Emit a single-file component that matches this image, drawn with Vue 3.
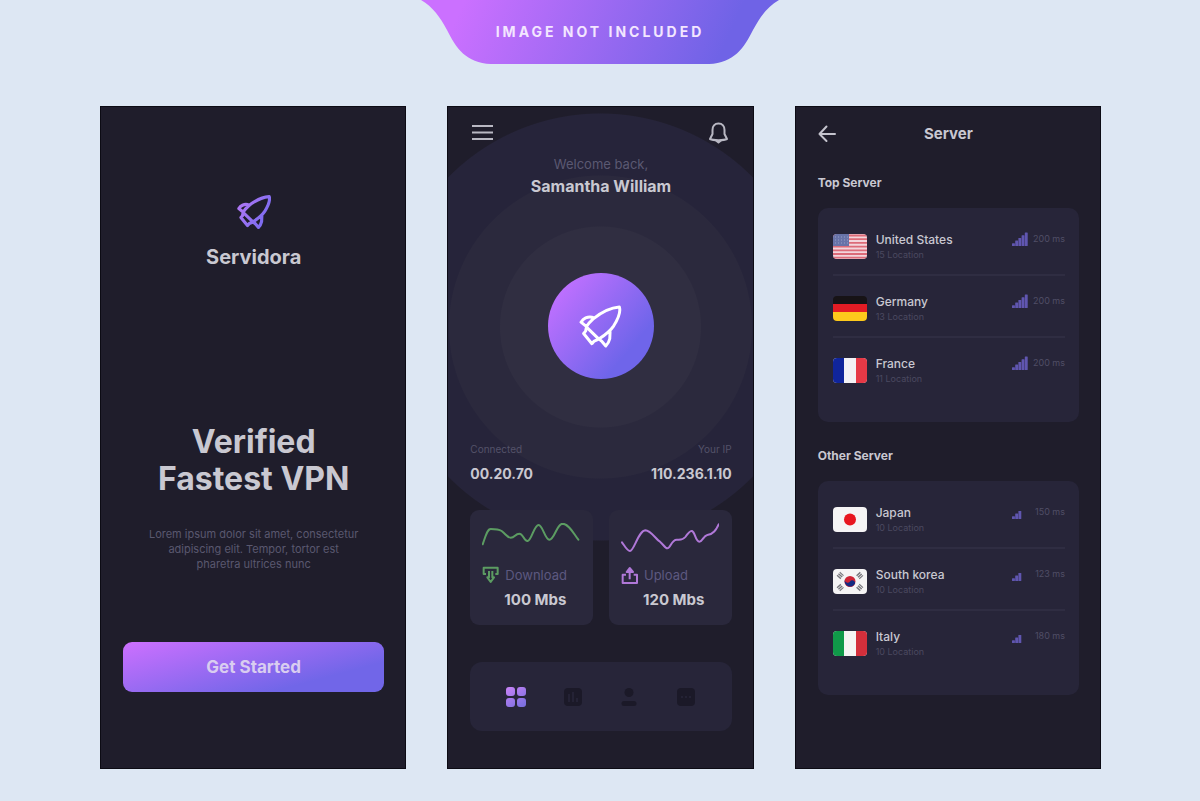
<script setup>
import { ref } from 'vue';

const activeTab = ref('home');

const rocketPath =
    'M519 289 C492 291 462 307 440 325 C431 333 424 341 419 349 L457 386 C474 375 490 364 502 346 C515 325 524 304 519 289 Z ' +
    'M442 322 C434 318 424 319 417 322 C410 325 406 330 403 335 L418 347 ' +
    'M419 352 L417 362 L411 369 L436 400 L443 392 L455 387 ' +
    'M459 387 L467 394 L478 407 C484 401 488 394 490 385 L491 363';

const speeds = [
    {
        id: 'download',
        label: 'Download',
        value: '100 Mbs',
        box: '66 54 294 90',
        line: 'M68 118 C78 90 82 72 92 72 C105 72 115 72 125 78 C138 88 142 98 152 98 C165 98 165 86 178 86 C190 86 192 110 203 108 C215 106 222 60 236 60 C248 60 255 104 268 104 C284 104 290 56 308 56 C328 58 340 85 355 104',
        iconBox: '62 183 54 54',
        icon: 'M74 207 H67 V188 H109 V207 H102 M83 198 V217 H78 L88 231 L98 217 H93 V198'
    },
    {
        id: 'upload',
        label: 'Upload',
        value: '120 Mbs',
        box: '483 54 294 90',
        line: 'M486 112 C495 125 502 138 510 138 C522 138 535 78 556 76 C572 76 590 105 600 110 C610 118 615 130 622 130 C632 130 634 104 650 104 C662 104 668 106 676 96 C684 84 690 76 696 78 C706 82 706 110 718 110 C728 110 730 92 742 90 C760 88 768 75 776 58',
        iconBox: '480 183 54 54',
        icon: 'M495 209 H485 V234 H528 V209 H518 M506 223 V190 M497 201 L506 189 L516 201 Z'
    }
];

const groups = [
    {
        title: 'Top Server',
        servers: [
            { flag: 'us', name: 'United States', locations: 15, ping: 200, bars: 5 },
            { flag: 'de', name: 'Germany', locations: 13, ping: 200, bars: 5 },
            { flag: 'fr', name: 'France', locations: 11, ping: 200, bars: 5 }
        ]
    },
    {
        title: 'Other Server',
        servers: [
            { flag: 'jp', name: 'Japan', locations: 10, ping: 150, bars: 3 },
            { flag: 'kr', name: 'South korea', locations: 10, ping: 123, bars: 3 },
            { flag: 'it', name: 'Italy', locations: 10, ping: 180, bars: 3 }
        ]
    }
];
</script>

<template>
    <div class="page">
        <header class="banner">
            <svg class="banner-shape" viewBox="0 0 358 64" preserveAspectRatio="none" aria-hidden="true">
                <defs>
                    <linearGradient id="bannerFill" x1="0" y1="0" x2="1" y2="0.08">
                        <stop offset="0.12" stop-color="#cb70ff" />
                        <stop offset="0.9" stop-color="#6f63e6" />
                    </linearGradient>
                </defs>
                <path d="M0 0 H358 C346 7 339 17 332 30 C323 48 313 63 288 64 H70 C45 63 35 48 26 30 C19 17 12 7 0 0 Z" fill="url(#bannerFill)" />
            </svg>
            <span class="banner-text">IMAGE NOT INCLUDED</span>
        </header>

        <main class="phones">
            <!-- Onboarding -->
            <section class="phone welcome">
                <svg class="logo" viewBox="397 283 128 130" aria-hidden="true">
                    <defs>
                        <linearGradient id="logoStroke" x1="0" y1="0" x2="1" y2="0.6">
                            <stop offset="0" stop-color="#b678f5" />
                            <stop offset="1" stop-color="#7a6bf0" />
                        </linearGradient>
                    </defs>
                    <path :d="rocketPath" fill="none" stroke="url(#logoStroke)" stroke-width="12" stroke-linejoin="round" stroke-linecap="round" />
                </svg>
                <p class="brand">Servidora</p>
                <h1 class="headline">Verified<br />Fastest VPN</h1>
                <p class="intro">
                    Lorem ipsum dolor sit amet, consectetur<br />
                    adipiscing elit. Tempor, tortor est<br />
                    pharetra ultrices nunc
                </p>
                <button class="start" type="button">Get Started</button>
            </section>

            <!-- Home -->
            <section class="phone home">
                <div class="topbar">
                    <button class="icon-button" type="button" aria-label="Menu">
                        <svg width="24" height="22" viewBox="0 0 24 22">
                            <path d="M2 4 H23 M2 10.5 H23 M2 17 H23" stroke="#b9b8c3" stroke-width="2.2" />
                        </svg>
                    </button>
                    <button class="icon-button" type="button" aria-label="Notifications">
                        <svg width="24" height="22" viewBox="0 0 24 22" fill="none" stroke="#b9b8c3" stroke-width="2" stroke-linejoin="round" stroke-linecap="round">
                            <path d="M10.5 1.5 C6.5 1.5 4.5 4.5 4.5 8 V12 L2 17 C5 18.5 16 18.5 19 17 L16.5 12 V8 C16.5 4.5 14.5 1.5 10.5 1.5 Z" />
                            <path d="M8 18.5 L10.5 20.5 L13 18.5" />
                        </svg>
                    </button>
                </div>
                <p class="greeting">Welcome back,</p>
                <h2 class="user">Samantha William</h2>

                <button class="connect" type="button" aria-label="Connect">
                    <svg width="43" height="43" viewBox="397 283 130 130" aria-hidden="true">
                        <path :d="rocketPath" fill="none" stroke="#fff" stroke-width="9" stroke-linejoin="round" stroke-linecap="round" />
                    </svg>
                </button>

                <dl class="status">
                    <div>
                        <dt>Connected</dt>
                        <dd>00.20.70</dd>
                    </div>
                    <div class="status-right">
                        <dt>Your IP</dt>
                        <dd>110.236.1.10</dd>
                    </div>
                </dl>

                <div class="speeds">
                    <article v-for="speed in speeds" :key="speed.id" class="speed" :class="speed.id">
                        <svg class="chart" :viewBox="speed.box" aria-hidden="true">
                            <path :d="speed.line" />
                        </svg>
                        <div class="speed-label">
                            <svg class="speed-icon" :viewBox="speed.iconBox" aria-hidden="true">
                                <path :d="speed.icon" />
                            </svg>
                            <span>{{ speed.label }}</span>
                        </div>
                        <strong class="speed-value">{{ speed.value }}</strong>
                    </article>
                </div>

                <nav class="tabs">
                    <button type="button" class="icon-button" aria-label="Home" @click="activeTab = 'home'">
                        <svg width="20" height="20" viewBox="0 0 20 20">
                            <defs>
                                <linearGradient id="tabFill" gradientUnits="userSpaceOnUse" x1="0" y1="0" x2="14" y2="20">
                                    <stop offset="0" stop-color="#c983f7" />
                                    <stop offset="1" stop-color="#7d70e0" />
                                </linearGradient>
                            </defs>
                            <g :fill="activeTab === 'home' ? 'url(#tabFill)' : '#1b1928'">
                                <rect x="0" y="0" width="9" height="9" rx="3" />
                                <rect x="11" y="0" width="9" height="9" rx="3" />
                                <rect x="0" y="11" width="9" height="9" rx="3" />
                                <rect x="11" y="11" width="9" height="9" rx="3" />
                            </g>
                        </svg>
                    </button>
                    <button type="button" class="icon-button" aria-label="Statistics">
                        <svg width="20" height="20" viewBox="0 0 20 20">
                            <rect x="1" y="1" width="18" height="18" rx="4" fill="#1b1928" />
                            <path d="M6 7 V15 M10 5 V15 M14 11 V15" stroke="#28263a" stroke-width="1.5" />
                        </svg>
                    </button>
                    <button type="button" class="icon-button" aria-label="Profile">
                        <svg width="20" height="20" viewBox="0 0 20 20" fill="#1b1928">
                            <circle cx="10" cy="5.5" r="4.5" />
                            <rect x="2.5" y="14" width="15" height="5" rx="2.5" />
                        </svg>
                    </button>
                    <button type="button" class="icon-button" aria-label="More">
                        <svg width="20" height="20" viewBox="0 0 20 20">
                            <rect x="1" y="1" width="18" height="18" rx="4" fill="#1b1928" />
                            <path d="M5 10 H15" stroke="#28263a" stroke-width="1.5" stroke-dasharray="2 2" />
                        </svg>
                    </button>
                </nav>
            </section>

            <!-- Server list -->
            <section class="phone list">
                <div class="list-head">
                    <button class="icon-button" type="button" aria-label="Back">
                        <svg width="18" height="18" viewBox="0 0 18 18" fill="none" stroke="#c4c3cd" stroke-width="2" stroke-linecap="round" stroke-linejoin="round">
                            <path d="M17 9 H1.5 M8.5 1.5 L1.5 9 L8.5 16" />
                        </svg>
                    </button>
                    <h2 class="list-title">Server</h2>
                </div>

                <template v-for="group in groups" :key="group.title">
                    <h3 class="group-title">{{ group.title }}</h3>
                    <ul class="group">
                        <li v-for="server in group.servers" :key="server.name" class="server">
                            <svg class="flag" viewBox="0 0 34 25" aria-hidden="true">
                                <g v-if="server.flag === 'us'">
                                    <rect width="34" height="25" fill="#f3d5db" />
                                    <path d="M0 1.5 H34 M0 5.2 H34 M0 8.9 H34 M0 12.6 H34 M0 16.3 H34 M0 20 H34 M0 23.7 H34" stroke="#dc6b78" stroke-width="1.8" />
                                    <rect width="16" height="12" fill="#6873a8" />
                                    <path d="M2 3 H15 M2 6 H15 M2 9 H15" stroke="#98a0c6" stroke-dasharray="1 2" />
                                </g>
                                <g v-else-if="server.flag === 'de'">
                                    <rect width="34" height="25" fill="#171316" />
                                    <rect y="8" width="34" height="9" fill="#e31c24" />
                                    <rect y="16" width="34" height="9" fill="#fdc91c" />
                                </g>
                                <g v-else-if="server.flag === 'fr'">
                                    <rect width="34" height="25" fill="#f3f2f5" />
                                    <rect width="11" height="25" fill="#10259b" />
                                    <rect x="23" width="11" height="25" fill="#e63946" />
                                </g>
                                <g v-else-if="server.flag === 'jp'">
                                    <rect width="34" height="25" fill="#f5f4f5" />
                                    <circle cx="17" cy="12.5" r="6" fill="#e8151f" />
                                </g>
                                <g v-else-if="server.flag === 'kr'">
                                    <rect width="34" height="25" fill="#f5f4f5" />
                                    <circle cx="17" cy="12.5" r="5.5" fill="#cf2436" />
                                    <path d="M11.9 10.5 A2.8 2.8 0 0 0 17 12.5 A2.8 2.8 0 0 1 22.1 14.5 A5.5 5.5 0 0 1 11.9 10.5 Z" fill="#142a82" />
                                    <g stroke="#77767c" stroke-width="5" stroke-dasharray="1.4 0.7">
                                        <path d="M5.5 8.5 L9 4.5" />
                                        <path d="M25 4.5 L28.5 8.5" />
                                        <path d="M5.5 16.5 L9 20.5" />
                                        <path d="M25 20.5 L28.5 16.5" />
                                    </g>
                                </g>
                                <g v-else>
                                    <rect width="34" height="25" fill="#f5f4f3" />
                                    <rect width="11" height="25" fill="#109a49" />
                                    <rect x="23" width="11" height="25" fill="#d32f3b" />
                                </g>
                            </svg>
                            <div class="server-info">
                                <span class="server-name">{{ server.name }}</span>
                                <span class="server-locations">{{ server.locations }} Location</span>
                            </div>
                            <svg class="signal" viewBox="0 0 16 14" aria-hidden="true">
                                <rect
                                    v-for="n in server.bars"
                                    :key="n"
                                    :x="(n - 1) * 3.2"
                                    :y="14 - n * 2.7"
                                    width="2.9"
                                    :height="n * 2.7"
                                    rx="0.5"
                                />
                            </svg>
                            <span class="ping">{{ server.ping }} ms</span>
                        </li>
                    </ul>
                </template>
            </section>
        </main>
    </div>
</template>

<style>
body {
    margin: 0;
    background: #dde7f3;
}
</style>

<style scoped>
.page {
    min-height: 100vh;
    box-sizing: border-box;
    padding-bottom: 31px;
    background: #dde7f3;
    font-family: Inter, "Liberation Sans", sans-serif;
    color: #c9c8d1;
}

h1, h2, h3, p, ul, dl, dd {
    margin: 0;
    padding: 0;
}

svg {
    display: block;
}

button {
    border: 0;
    font: inherit;
    cursor: pointer;
}

.icon-button {
    padding: 0;
    background: none;
}

/* Top banner, shape and text share one grid cell */
.banner {
    display: grid;
    justify-content: center;
    align-items: center;
    height: 64px;
}

.banner-shape,
.banner-text {
    grid-area: 1 / 1;
}

.banner-shape {
    width: 358px;
    height: 64px;
}

.banner-text {
    text-align: center;
    font-size: 14px;
    line-height: 20px;
    font-weight: 700;
    letter-spacing: 3px;
    color: #f3e6ff;
}

.phones {
    display: grid;
    grid-template-columns: repeat(3, 1fr);
    gap: 41px;
    padding: 42px 99px 0 100px;
}

.phone {
    display: flex;
    flex-direction: column;
    box-sizing: border-box;
    padding: 16px 22px 38px 23px;
    background: #1f1d2b;
    box-shadow: inset 0 0 0 1px #0c0b14;
}

/* Onboarding */
.welcome {
    align-items: center;
    padding-top: 89px;
    text-align: center;
}

.logo {
    width: 34px;
    height: 34px;
}

.brand {
    margin-top: 14px;
    font-size: 20px;
    line-height: 28px;
    font-weight: 700;
}

.headline {
    margin-top: 152px;
    font-size: 32px;
    line-height: 37px;
    font-weight: 700;
}

.intro {
    margin-top: 30px;
    font-size: 11px;
    line-height: 15px;
    color: #5a586f;
}

.start {
    align-self: stretch;
    height: 50px;
    margin-top: 70px;
    border-radius: 9px;
    background: linear-gradient(165deg, #cd70ff 0%, #7166e8 75%);
    font-size: 17px;
    font-weight: 700;
    color: #d9cdf0;
}

/* Home */
.home {
    background: radial-gradient(circle at 50% 221px, #302e41 100px, #2b293d 101px 151px, #26243a 152px 213px, #1f1d2b 214px);
}

.topbar {
    display: flex;
    justify-content: space-between;
}

.greeting {
    margin-top: 12px;
    text-align: center;
    font-size: 13px;
    line-height: 16px;
    color: #5b5972;
}

.user {
    margin-top: 4px;
    text-align: center;
    font-size: 16px;
    line-height: 20px;
    font-weight: 700;
}

.connect {
    display: grid;
    place-items: center;
    align-self: center;
    width: 106px;
    height: 106px;
    margin-top: 77px;
    padding: 0;
    border-radius: 50%;
    background: linear-gradient(130deg, #c070ff 12%, #6f65ea 75%);
}

.status {
    display: flex;
    justify-content: space-between;
    margin-top: 63px;
}

.status-right {
    text-align: right;
}

.status dt {
    font-size: 10px;
    line-height: 14px;
    color: #545269;
}

.status dd {
    margin-top: 8px;
    font-size: 14px;
    line-height: 20px;
    font-weight: 700;
}

.speeds {
    display: grid;
    grid-template-columns: 1fr 1fr;
    gap: 16px;
    margin-top: 26px;
}

.speed {
    padding: 13px 12px 15px;
    border-radius: 9px;
    background: #2a283c;
}

.chart {
    width: 98px;
    height: 30px;
}

.chart path {
    fill: none;
    stroke-width: 6;
    stroke-linecap: round;
}

.speed-icon path {
    fill: none;
    stroke-width: 6;
    stroke-linejoin: round;
}

.download path {
    stroke: #5c9c62;
}

.upload path {
    stroke: #b078d8;
}

.speed-label {
    display: flex;
    align-items: center;
    gap: 5px;
    height: 18px;
    margin-top: 13px;
    font-size: 13px;
    color: #5d5980;
}

.speed-icon {
    width: 18px;
    height: 18px;
}

.speed-value {
    display: block;
    margin: 6px 0 0 22px;
    font-size: 15px;
    line-height: 20px;
    font-weight: 700;
}

.tabs {
    display: flex;
    justify-content: space-between;
    align-items: center;
    height: 69px;
    margin-top: 37px;
    padding: 0 36px;
    border-radius: 12px;
    background: #272539;
}

/* Server list */
.list {
    padding-top: 18px;
}

.list-head {
    display: grid;
    grid-template-columns: 18px 1fr 18px;
    align-items: center;
    height: 20px;
}

.list-title {
    text-align: center;
    font-size: 15px;
    line-height: 20px;
    font-weight: 700;
}

.group-title {
    margin: 26px 0 17px;
    font-size: 12px;
    line-height: 16px;
    font-weight: 700;
}

.list-head + .group-title {
    margin-top: 31px;
}

.group {
    padding: 6px 14px 22px 15px;
    border-radius: 10px;
    background: #272539;
    list-style: none;
}

.server {
    display: grid;
    grid-template-columns: 34px 1fr 16px 37px;
    align-items: start;
    box-sizing: border-box;
    height: 62px;
    padding-top: 18px;
    border-bottom: 2px solid #2f2d42;
}

.server:last-child {
    border-bottom: 0;
}

.flag {
    width: 34px;
    height: 25px;
    margin-top: 2px;
    border-radius: 4px;
}

.server-info {
    padding-left: 9px;
}

.server-name,
.server-locations {
    display: block;
}

.server-name {
    font-size: 12px;
    line-height: 16px;
    font-weight: 500;
}

.server-locations {
    font-size: 9px;
    line-height: 13px;
    color: #4b4960;
}

.signal {
    width: 16px;
    height: 14px;
    fill: #6056b0;
}

.ping {
    text-align: right;
    font-size: 9px;
    line-height: 14px;
    white-space: nowrap;
    color: #504e66;
}
</style>
